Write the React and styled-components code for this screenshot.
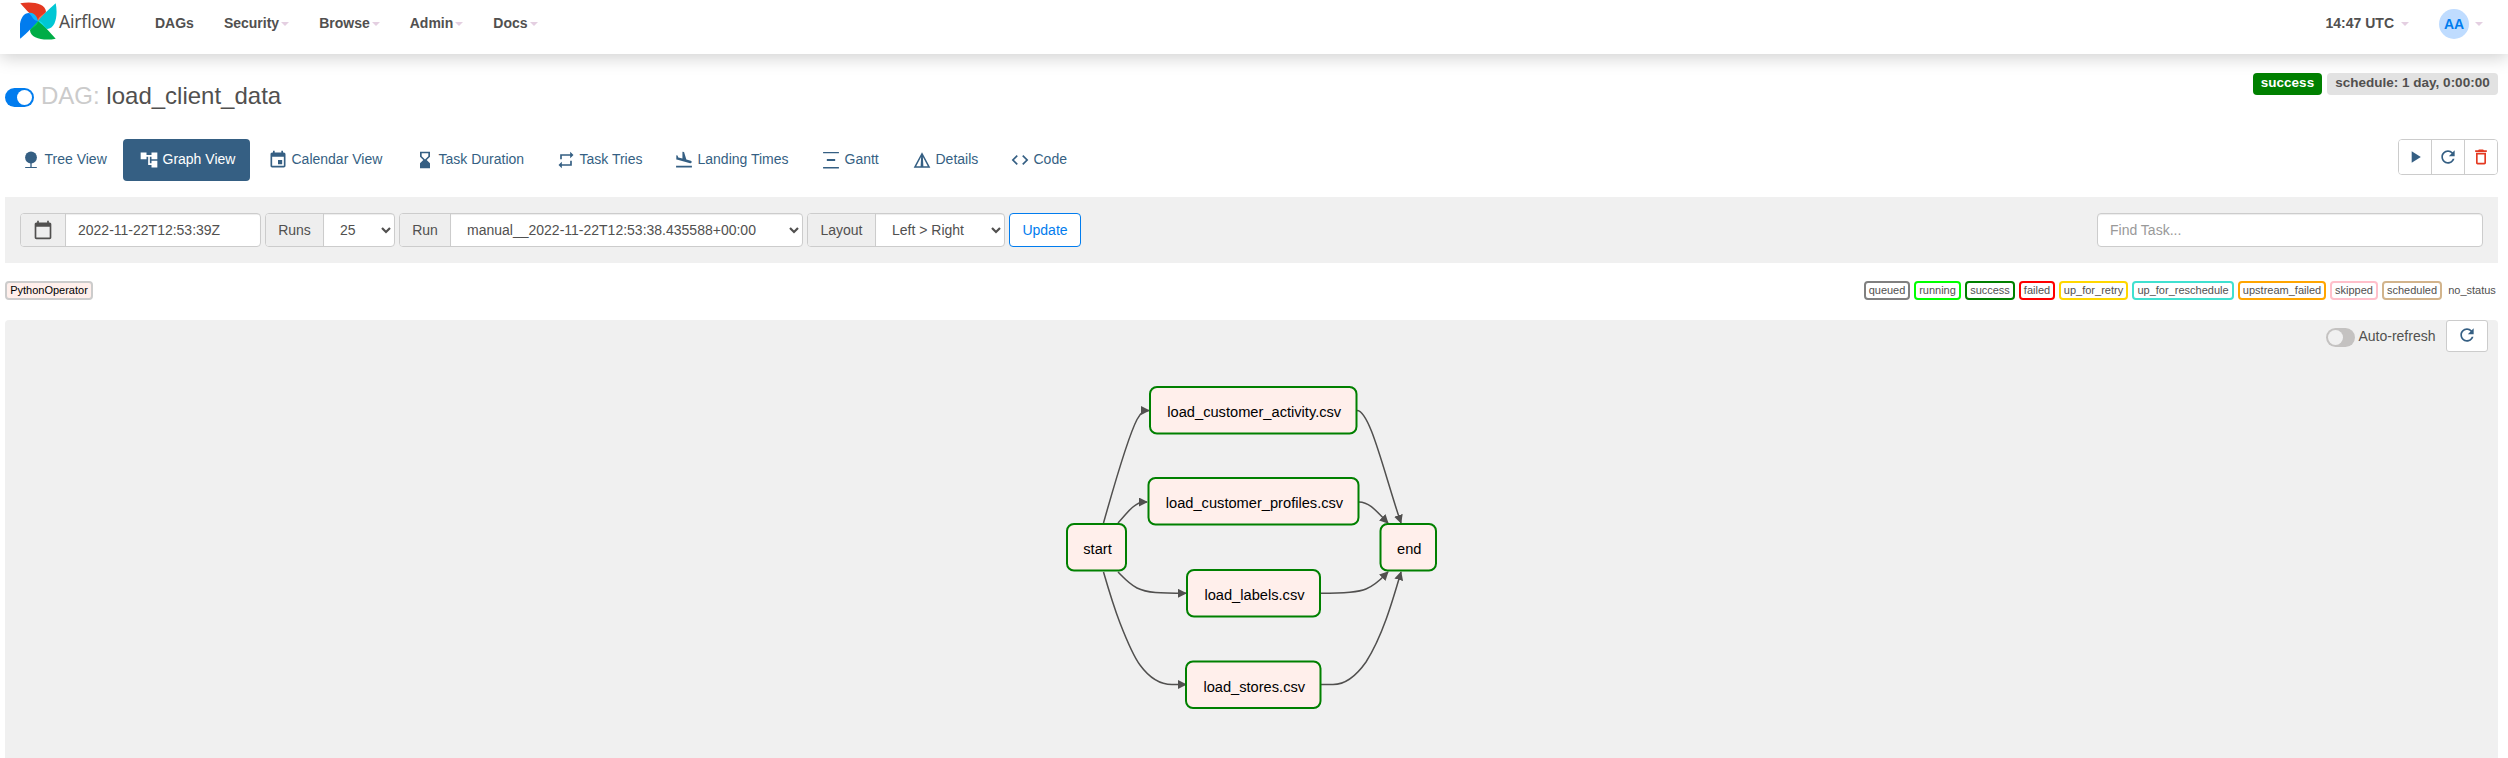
import React from "react";
import styled, { createGlobalStyle } from "styled-components";

const Global = createGlobalStyle`
  * { box-sizing: border-box; }
  body { margin: 0; background: #fff; color: #51504f; font: 14px/20px "Liberation Sans", Arial, sans-serif; overflow: hidden; }
  button, input, select { font: inherit; color: inherit; }
`;
const INK = "#51504f";
const BLUE = "#355f83";

const Navbar = styled.header`
  height: 54px; display: flex; justify-content: space-between; padding: 0 10px 0 20px;
  background: #fff; box-shadow: 0 4px 16px rgba(0,0,0,.18);
`;
const NavGroup = styled.div`display: flex; align-items: flex-start;`;
const Brand = styled.a`display: flex; width: 120px; height: 42px; color: ${INK};`;
const BrandName = styled.span`font: 17.5px/22px "Noto Sans", sans-serif; margin: 10px 0 0 2px; letter-spacing: -.2px;`;
const NavItem = styled.a`
  display: flex; align-items: center; height: 46px; padding: 0 15px; font-weight: 700; gap: ${p => p.$gap ?? 2}px;
`;
const Caret = styled.i`border: 4px solid transparent; border-top-color: #e4cfe1; border-bottom: 0; margin-top: 2px;`;
const Avatar = styled.span`
  width: 30px; height: 30px; border-radius: 50%; background: #bfdcff; color: #017cee;
  display: grid; place-items: center; margin-top: 2px;
`;

const Main = styled.main`padding: 0 10px 0 5px;`;
const TitleRow = styled.section`display: flex; justify-content: space-between; height: 85px; padding-top: 19px;`;
const Title = styled.h3`margin: 8px 0 0; font-size: 24px; line-height: 30px; font-weight: 400; display: flex; align-items: center;
  gap: 7px; height: 30px;`;
const Dim = styled.span`color: #cbcbcb;`;
const Switch = styled.span`
  width: 29px; height: 19px; border-radius: 10px; background: ${p => (p.$on ? "#017cee" : "#c4c2c1")}; padding: 2px;
  display: flex; justify-content: ${p => (p.$on ? "flex-end" : "flex-start")}; margin-top: ${p => p.$mt ?? 0}px;
  &::after { content: ""; width: 15px; height: 15px; border-radius: 50%; background: ${p => (p.$on ? "#fff" : "#f0f0f0")}; }
`;
const Labels = styled.div`display: flex; gap: 5px;`;
const Label = styled.span`
  height: 22px; line-height: 20px; border-radius: 4px; width: ${p => p.$w}px; text-align: center; font-weight: 700; font-size: 13.5px;
  background: ${p => (p.$green ? "#008000" : "#e2e2e2")}; color: ${p => (p.$green ? "#fff" : INK)};
`;
const TabRow = styled.nav`display: flex; justify-content: space-between; height: 58px;`;
const Tabs = styled.div`display: flex; gap: 2px;`;
const Tab = styled.a`
  height: 42px; width: ${p => p.$w}px; padding: 0 0 3px 16px; display: flex; align-items: center; gap: 3.500px; border-radius: 4px; white-space: nowrap;
  color: ${p => (p.$active ? "#fff" : BLUE)}; background: ${p => (p.$active ? BLUE : "transparent")};
  svg { margin-top: 3px; flex: none; }
`;
const Actions = styled.div`
  display: flex; height: 36px; border: 1px solid #ccc; border-radius: 4px; overflow: hidden; background: #fff;
`;
const Action = styled.button`
  width: ${p => (p.$first ? 32 : 33)}px; border: 0; border-left: ${p => (p.$first ? 0 : 1)}px solid #ccc; background: #fff; padding: 0;
  color: ${p => (p.$danger ? "#e43921" : BLUE)}; display: grid; place-items: center;
`;

const FilterBar = styled.form`
  background: #f0f0f0; height: 66px; padding: 16px 15px; display: flex; gap: 4px;
`;
const Group = styled.div`
  display: flex; height: 34px; width: ${p => p.$w}px; border: 1px solid #ccc; border-radius: 4px; background: #fff; overflow: hidden;
`;
const Addon = styled.span`
  width: ${p => p.$w}px; display: grid; place-items: center; background: #eee; border-right: 1px solid #ccc; flex: none;
`;
const Value = styled.span`flex: 1; padding: 6px 0 0 12px; box-shadow: inset 0 1px 1px rgba(0,0,0,.075);`;
const Select = styled.span`
  flex: 1; display: flex; align-items: center; justify-content: space-between; padding: 0 3px 0 16px;
  box-shadow: inset 0 1px 1px rgba(0,0,0,.075);
`;
const Update = styled.button`
  width: 72px; height: 34px; background: #fff; color: #017cee; border: 1px solid #017cee; border-radius: 4px; padding: 0;
`;
const Search = styled.input`
  margin-left: auto; width: 386px; height: 34px; border: 1px solid #ccc; border-radius: 4px; padding: 6px 12px; background: #fff;
  box-shadow: inset 0 1px 1px rgba(0,0,0,.075);
  &::placeholder { color: #999; opacity: 1; }
`;

const Legend = styled.section`display: flex; justify-content: space-between; height: 57px; padding-top: 18px;`;
const States = styled.div`display: flex; gap: 4px;`;
const Chip = styled.span`
  height: 19px; border: 2px solid ${p => p.$c}; border-radius: 4px; background: ${p => p.$bg || "#fff"};
  width: ${p => p.$w}px; display: flex; justify-content: center; font-size: 11px; line-height: 15px; color: ${p => (p.$bg ? "#000" : INK)};
  white-space: nowrap;
`;

const GraphPanel = styled.section`position: relative; height: 440px; background: #f0f0f0; border-radius: 4px 4px 0 0;`;
const Refresh = styled.div`display: flex; justify-content: flex-end; padding-right: 10px;`;
const RefreshLabel = styled.span`margin: 6px 10.500px 0 3.500px;`;
const RefreshButton = styled.button`
  width: 42px; height: 32px; border: 1px solid #ccc; border-radius: 3px; background: #fff; color: ${BLUE}; display: grid; place-items: center; padding: 0 0 2px;
`;
const Graph = styled.svg`position: absolute; left: 1035px; top: 40px; overflow: visible;`;

const Svg = ({ s = 20, d, children, ...r }) => (
  <svg width={s} height={s} viewBox="0 0 24 24" fill="currentColor" {...r}>{d ? <path d={d} fillRule="evenodd" /> : children}</svg>
);
const paths = {
  graph: "M22 11V3h-7v3H9V3H2v8h7V8h2v10h4v3h7v-8h-7v3h-2V8h2v3z",
  event: "M17 12h-5v5h5v-5zM16 1v2H8V1H6v2H5c-1.11 0-1.99.9-1.99 2L3 19c0 1.100.89 2 2 2h14c1.100 0 2-.9 2-2V5c0-1.100-.9-2-2-2h-1V1h-2zm3 18H5V8h14v11z",
  hourglass: "M18 22l-.01-6L14 12l3.990-4.010L18 2H6v6l4 4-4 3.990V22h12zM8 7.500V4h8v3.500l-4 4-4-4z",
  repeat: "M7 7h10v3l4-4-4-4v3H5v6h2V7zm10 10H7v-3l-4 4 4 4v-3h12v-6h-2v4z",
  land: "M2.500 19h19v2h-19v-2zm7.180-5.730l4.350 1.160 5.310 1.420c.8.210 1.620-.26 1.840-1.060.21-.8-.26-1.620-1.060-1.840l-5.310-1.420-2.760-9.020L10.120 2v8.280L5.150 8.950l-.93-2.320-1.450-.39v5.170l1.600.43 5.310 1.430z",
  code: "M9.400 16.600L4.800 12l4.600-4.600L8 6l-6 6 6 6 1.400-1.400zm5.200 0l4.600-4.600-4.600-4.600L16 6l6 6-6 6-1.400-1.400z",
  play: "M8 5v14l11-7z",
  refresh: "M17.650 6.350C16.200 4.900 14.210 4 12 4c-4.420 0-7.990 3.580-7.990 8s3.570 8 7.990 8c3.730 0 6.840-2.550 7.730-6h-2.080c-.82 2.330-3.040 4-5.650 4-3.310 0-6-2.690-6-6s2.690-6 6-6c1.660 0 3.140.69 4.220 1.780L13 11h7V4l-2.350 2.350z",
  trash: "M6 19c0 1.100.9 2 2 2h8c1.100 0 2-.9 2-2V7H6v12zM8 9h8v10H8V9zm7.500-5l-1-1h-5l-1 1H5v2h14V4z",
  calendar: "M20 3h-1V1h-2v2H7V1H5v2H4c-1.100 0-2 .9-2 2v16c0 1.100.9 2 2 2h16c1.100 0 2-.9 2-2V5c0-1.100-.9-2-2-2zm0 18H4V8h16v13z",
};
const icons = {
  tree: <Svg><circle cx="12" cy="9" r="7.100" /><path d="M11.200 15h1.600v5.300H19v1.400H5v-1.400h6.200z" /></Svg>,
  gantt: <Svg><path d="M2.500 2.300h19v1.600h-19zM7 10.900h10v2.200H7zM2.500 20.500h19v1.600h-19z" /></Svg>,
  details: <Svg fill="none" stroke="currentColor" strokeWidth="1.800"><path d="M12 4.500L3.500 20.500h17zM12 5l-.8 15.500M12 5l.8 15.500" /></Svg>,
};
const Chevron = () => (
  <svg width="10" height="7" viewBox="0 0 10 7" fill="none" stroke="#51504f" strokeWidth="2.200"><path d="M1 1l4 4 4-4" /></svg>
);
const blades = [["#e43921", "#ff7557"], ["#00c7d4", "#11e1ee"], ["#00ad46", "#04d659"], ["#017cee", "#0cb6ff"]];
const Logo = () => (
  <svg width="37" height="42" viewBox="0 0 37 42">
    {blades.map(([main, fold], i) => (
      <g key={main} transform={`translate(18 21) rotate(${i * 90})`}>
        <path d="M-17.700 -17.700C-7 -20 8 -18 8 -9C6 -5 3 -3 0 0C-6 -5 -11 -10 -17.700 -17.700Z" fill={main} />
        <path d="M8 -9C9 -4.500 5 -1 0 0C0 -4.500 5 -6 8 -9Z" fill={fold} />
      </g>
    ))}
  </svg>
);

const menus = ["Security", "Browse", "Admin", "Docs"];
const tabs = [
  ["Tree View", 116, icons.tree], ["Graph View", 127, <Svg d={paths.graph} />], ["Calendar View", 145, <Svg d={paths.event} />],
  ["Task Duration", 139, <Svg d={paths.hourglass} />], ["Task Tries", 116, <Svg d={paths.repeat} />],
  ["Landing Times", 145, <Svg d={paths.land} />], ["Gantt", 89, icons.gantt], ["Details", 96, icons.details], ["Code", 90, <Svg d={paths.code} />],
];
const states = [
  ["queued", "gray", 46], ["running", "lime", 47], ["success", "green", 50], ["failed", "red", 36], ["up_for_retry", "gold", 69],
  ["up_for_reschedule", "turquoise", 102], ["upstream_failed", "orange", 88], ["skipped", "pink", 48], ["scheduled", "tan", 60], ["no_status", "white", 52],
];
const nodes = [
  ["load_customer_activity.csv", 110, 27, 206.500], ["load_customer_profiles.csv", 108.500, 118, 210], ["start", 27, 164, 59],
  ["end", 340.500, 164, 55.500], ["load_labels.csv", 147, 210, 133], ["load_stores.csv", 146, 301.500, 134.500],
];
const edges = [
  "M63.500 163C77 115 90 73 97 59.500C101 52 104 50.500 109 50.500", "M78 163C87 153 95 142 104 142H107",
  "M63.500 212C69 231 75 250 80 263C87 281 94 297 100 305C108 316 118 324.500 132 324.500H146",
  "M78 212C83 217 89 224 97 228C107 233 120 233.300 146 233.300",
  "M317 50.500C330 50.500 344 113 361 163", "M319 142C330 142 338 153 348 163",
  "M281 233.300C300 233.300 317 233 326 229C336 225 342 218 348 212",
  "M281 324.500H293C308 324.500 319 312 326 302C342 277 352 243 361 212",
];

export default function App() {
  return (
    <>
      <Global />
      <Navbar>
        <NavGroup>
          <Brand><Logo /><BrandName>Airflow</BrandName></Brand>
          <NavItem>DAGs</NavItem>
          {menus.map(m => <NavItem key={m}>{m}<Caret /></NavItem>)}
        </NavGroup>
        <NavGroup>
          <NavItem $gap={7}>14:47 UTC<Caret /></NavItem>
          <NavItem $gap={6}><Avatar>AA</Avatar><Caret /></NavItem>
        </NavGroup>
      </Navbar>
      <Main>
        <TitleRow>
          <Title><Switch $on $mt={3} /><span><Dim>DAG:</Dim> load_client_data</span></Title>
          <Labels><Label $green $w={69}>success</Label><Label $w={171}>schedule: 1 day, 0:00:00</Label></Labels>
        </TitleRow>
        <TabRow>
          <Tabs>{tabs.map(([t, w, icon], i) => <Tab key={t} $w={w} $active={i === 1}>{icon}{t}</Tab>)}</Tabs>
          <Actions>
            <Action $first><Svg d={paths.play} /></Action>
            <Action><Svg d={paths.refresh} /></Action>
            <Action $danger><Svg d={paths.trash} /></Action>
          </Actions>
        </TabRow>
        <FilterBar>
          <Group $w={241}><Addon $w={45}><Svg d={paths.calendar} /></Addon><Value>2022-11-22T12:53:39Z</Value></Group>
          <Group $w={130}><Addon $w={58}>Runs</Addon><Select>25<Chevron /></Select></Group>
          <Group $w={404}><Addon $w={51}>Run</Addon><Select>manual__2022-11-22T12:53:38.435588+00:00<Chevron /></Select></Group>
          <Group $w={198}><Addon $w={68}>Layout</Addon><Select>Left &gt; Right<Chevron /></Select></Group>
          <Update type="button">Update</Update>
          <Search placeholder="Find Task..." />
        </FilterBar>
        <Legend>
          <Chip $c="#ccc" $bg="#ffefeb" $w={88}>PythonOperator</Chip>
          <States>{states.map(([s, c, w]) => <Chip key={s} $c={c} $w={w}>{s}</Chip>)}</States>
        </Legend>
        <GraphPanel>
          <Refresh>
            <Switch $mt={8} /><RefreshLabel>Auto-refresh</RefreshLabel>
            <RefreshButton><Svg d={paths.refresh} /></RefreshButton>
          </Refresh>
          <Graph width="420" height="340">
            <defs>
              <marker id="arrow" viewBox="0 0 10 10" refX="9" refY="5" markerUnits="userSpaceOnUse" markerWidth="9" markerHeight="9" orient="auto">
                <path d="M0 0L10 5L0 10Z" fill={INK} />
              </marker>
            </defs>
            {edges.map(d => <path key={d} d={d} fill="none" stroke={INK} strokeWidth="1.500" markerEnd="url(#arrow)" />)}
            {nodes.map(([t, x, y, w]) => (
              <g key={t}>
                <rect x={x} y={y} width={w} height="46.500" rx="7" fill="#ffefeb" stroke="green" strokeWidth="2" />
                <text x={x + w / 2 + 1} y={y + 30} fontSize="14.650" textAnchor="middle" fill="#000">{t}</text>
              </g>
            ))}
          </Graph>
        </GraphPanel>
      </Main>
    </>
  );
}
